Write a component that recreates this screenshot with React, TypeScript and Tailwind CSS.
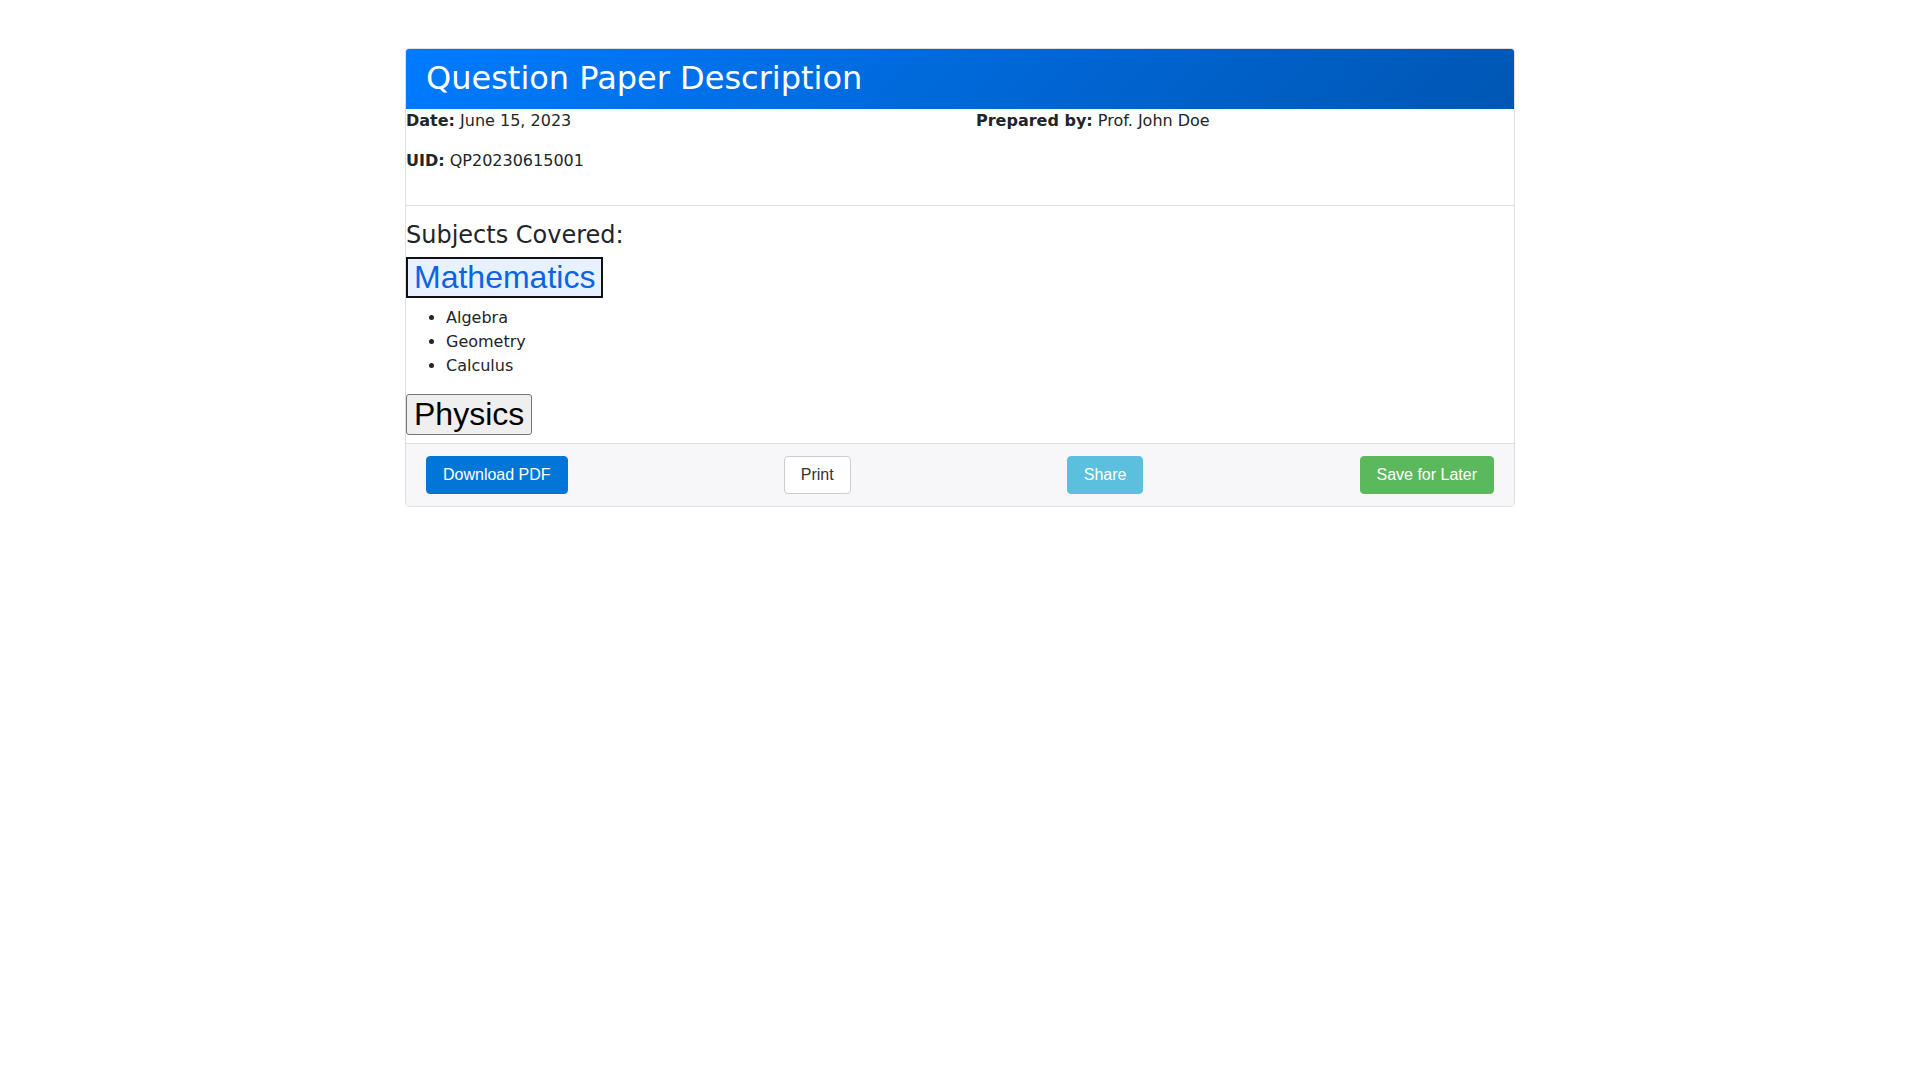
import React from "react";

export default function App() {
  return (
    <div className="min-h-screen bg-white pt-12 text-[#212529]" style={{ fontFamily: '"DejaVu Sans", sans-serif' }}>
      <div className="mx-auto w-[1110px] overflow-hidden rounded border border-[#dfdfdf] bg-white">
        <div className="flex h-[60px] items-center bg-[linear-gradient(135deg,#007bff,#0056b3)] px-5 pb-[2px]">
          <h2 className="text-[32px] font-normal leading-[38px] text-white">Question Paper Description</h2>
        </div>

        <div className="grid grid-cols-2 gap-x-8 border-b border-[#dfdfdf] pb-4 text-[16px] leading-6">
          <p className="mb-4">
            <strong className="font-bold">Date:</strong> June 15, 2023
          </p>
          <p className="mb-4">
            <strong className="font-bold">Prepared by:</strong> Prof. John Doe
          </p>
          <p className="mb-4">
            <strong className="font-bold">UID:</strong> QP20230615001
          </p>
        </div>

        <div className="pt-[15px]">
          <h4 className="mb-[7px] text-[24px] font-normal leading-[29px]">Subjects Covered:</h4>

          <div className="mb-2">
            <button
              className="flex h-[41px] items-center border-2 border-[#111111] bg-[#e7f1ff] px-[6px] pb-[2px] text-[32px] leading-none text-[#0c63e4]"
              style={{ fontFamily: '"Liberation Sans", Arial, sans-serif' }}
            >
              Mathematics
            </button>
          </div>
          <ul className="mb-4 list-disc pl-10 text-[16px] leading-6">
            <li>Algebra</li>
            <li>Geometry</li>
            <li>Calculus</li>
          </ul>

          <div className="mb-2">
            <button
              className="flex h-[41px] items-center rounded-[3px] border border-[#767676] bg-[#efefef] px-[7px] pb-[2px] text-[32px] leading-none text-black"
              style={{ fontFamily: '"Liberation Sans", Arial, sans-serif' }}
            >
              Physics
            </button>
          </div>
        </div>

        <div
          className="flex items-center justify-between border-t border-[#dfdfdf] bg-[#f7f7f9] px-5 py-3 text-[16px]"
          style={{ fontFamily: '"Liberation Sans", Arial, sans-serif' }}
        >
          <button className="flex h-[38px] items-center rounded border border-[#0275d8] bg-[#0275d8] px-4 text-white">
            Download PDF
          </button>
          <button className="flex h-[38px] items-center rounded border border-[#cccccc] bg-white px-4 text-[#333333]">
            Print
          </button>
          <button className="flex h-[38px] items-center rounded border border-[#5bc0de] bg-[#5bc0de] px-4 text-white">
            Share
          </button>
          <button className="flex h-[38px] items-center rounded border border-[#5cb85c] bg-[#5cb85c] px-4 text-white">
            Save for Later
          </button>
        </div>
      </div>
    </div>
  );
}
